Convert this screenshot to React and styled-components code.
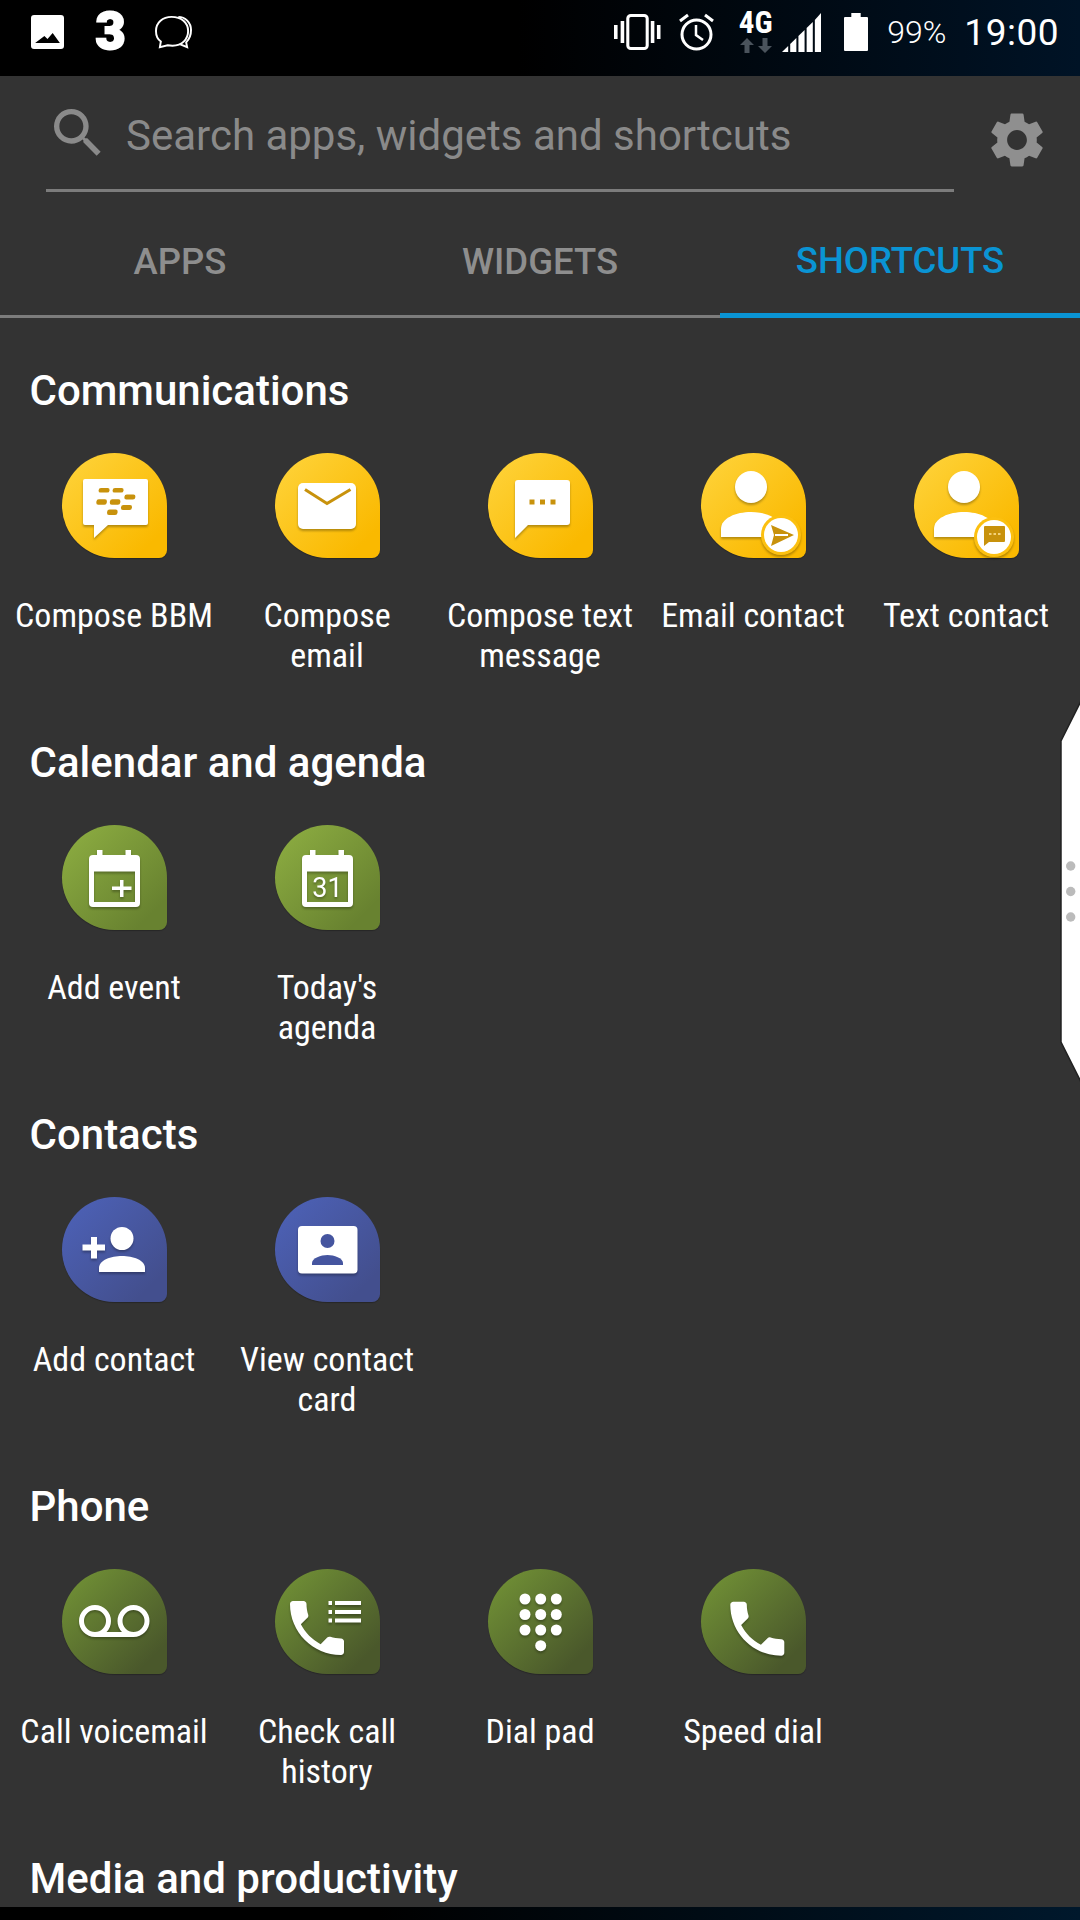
import React from 'react'
import styled, { createGlobalStyle } from 'styled-components'
import { MdSearch, MdSettings } from 'react-icons/md'

const PHONE = 'M6.62 10.79c1.44 2.83 3.76 5.14 6.59 6.59l2.2-2.2c.27-.27.67-.36 1.02-.24 1.12.37 2.33.57 3.57.57.55 0 1 .45 1 1V20c0 .55-.45 1-1 1-9.39 0-17-7.61-17-17 0-.55.45-1 1-1h3.5c.55 0 1 .45 1 1 0 1.25.2 2.45.57 3.57.11.35.03.74-.25 1.02l-2.2 2.2z'

const TONES = {
  yellow: { from: '#fed136', to: '#fab900', ink: '#c8920c' },
  green: { from: '#8aaa40', to: '#688230', ink: '#6f8a35' },
  blue: { from: '#4c60b4', to: '#434f8e', ink: '#45559f' },
  olive: { from: '#6f8e35', to: '#4a582b', ink: '#5c7030' },
}

const BbmGlyph = ({ ink }) => (
  <>
    <path d="M23 26h61a2 2 0 0 1 2 2v42a2 2 0 0 1-2 2H46L32 85V72h-9a2 2 0 0 1-2-2V28a2 2 0 0 1 2-2z" fill="#fff" />
    <g fill={ink} transform="skewX(-6) translate(5 0)">
      <rect x="35.5" y="35" width="11" height="4.6" rx="2.2" />
      <rect x="49.5" y="35" width="11" height="4.6" rx="2.2" />
      <rect x="62" y="41.5" width="11" height="5" rx="2.2" />
      <rect x="34.5" y="46.3" width="10.5" height="5.4" rx="2.2" />
      <rect x="48" y="46.3" width="10.5" height="5.4" rx="2.2" />
      <rect x="59.7" y="52" width="11" height="5" rx="2.2" />
      <rect x="46.3" y="56.5" width="10.5" height="5.4" rx="2.2" />
    </g>
  </>
)

const MailGlyph = ({ ink }) => (
  <>
    <rect x="23" y="30" width="58" height="46" rx="5" fill="#fff" />
    <path d="M30 36.500l22 14 23.500-14" fill="none" stroke={ink} strokeWidth="3" />
  </>
)

const TextGlyph = ({ ink }) => (
  <>
    <path d="M30 27h49a3 3 0 0 1 3 3v39a3 3 0 0 1-3 3H40L27 85V30a3 3 0 0 1 3-3z" fill="#fff" />
    <g fill={ink}>
      <rect x="41.500" y="46.500" width="5" height="5" />
      <rect x="52" y="46.500" width="5" height="5" />
      <rect x="62.500" y="46.500" width="5" height="5" />
    </g>
  </>
)

const PersonBase = () => (
  <>
    <circle cx="50" cy="34" r="16" fill="#fff" />
    <path d="M20 84V76c0-11 15-17 30-17s30 6 30 17v8z" fill="#fff" />
  </>
)

const EmailContactGlyph = ({ ink }) => (
  <>
    <PersonBase />
    <circle cx="80" cy="82" r="20" fill="#fcc010" />
    <circle cx="80" cy="82" r="17" fill="#fff" />
    <path d="M70 72l23 10-23 11 3-11z" fill={ink} />
    <path d="M74 82h13" stroke="#fff" strokeWidth="2" />
  </>
)

const TextContactGlyph = ({ ink }) => (
  <>
    <PersonBase />
    <circle cx="80" cy="84" r="20" fill="#fcc010" />
    <circle cx="80" cy="84" r="17" fill="#fff" />
    <path d="M71 73h19a1 1 0 0 1 1 1v14a1 1 0 0 1-1 1H75l-5 4V74a1 1 0 0 1 1-1z" fill={ink} />
    <g fill="#f3d27a">
      <rect x="75" y="80" width="2.500" height="2" />
      <rect x="79.500" y="80" width="2.500" height="2" />
      <rect x="84" y="80" width="2.500" height="2" />
    </g>
  </>
)

const CalendarBase = ({ x = 27 }) => (
  <path
    fillRule="evenodd"
    fill="#fff"
    d={`M${x + 8} 25h5.500v5h23v-5h5.500v5h5a4 4 0 0 1 4 4v44a4 4 0 0 1-4 4h-43a4 4 0 0 1-4-4v-44a4 4 0 0 1 4-4h4zM${x + 5} 46.500v30.500h41v-30.500z`}
  />
)

const AddEventGlyph = () => (
  <>
    <CalendarBase />
    <path d="M58 55h3.500v6.500h8v3.500h-8v7h-3.500v-7h-8v-3.500h8z" fill="#fff" />
  </>
)

const AgendaGlyph = () => (
  <>
    <CalendarBase />
    <GlyphText x="52.500" y="72" fontSize="27">31</GlyphText>
  </>
)

const AddContactGlyph = () => (
  <>
    <path d="M29 40h6v7.500h8v6h-8v8h-6v-8h-8.500v-6h8.500z" fill="#fff" />
    <circle cx="60" cy="41.500" r="11.500" fill="#fff" />
    <path d="M37 75v-4c0-8 12-12 23-12s23 4 23 12v4z" fill="#fff" />
  </>
)

const ContactCardGlyph = ({ ink }) => (
  <>
    <rect x="23" y="29" width="59.500" height="47.500" rx="4" fill="#fff" />
    <circle cx="52.500" cy="44" r="7" fill={ink} />
    <path d="M37 68v-2c0-5 9-8 15.500-8s15.500 3 15.500 8v2z" fill={ink} />
  </>
)

const VoicemailGlyph = () => (
  <g fill="none" stroke="#fff" strokeWidth="5">
    <circle cx="33" cy="52" r="13.500" />
    <circle cx="71.500" cy="52" r="13.500" />
    <path d="M33 65.500h38.500" />
  </g>
)

const HistoryGlyph = () => (
  <>
    <path d={PHONE} transform="translate(6 23) scale(3)" fill="#fff" />
    <g fill="#fff">
      <rect x="53.500" y="32" width="3.500" height="4" />
      <rect x="53.500" y="41" width="3.500" height="4" />
      <rect x="53.500" y="49.500" width="3.500" height="4" />
      <rect x="60" y="32" width="26" height="4" />
      <rect x="60" y="41" width="26" height="4" />
      <rect x="60" y="49.500" width="26" height="4" />
    </g>
  </>
)

const DialGlyph = () => (
  <g fill="#fff">
    {[30, 45.5, 61].flatMap((cy) =>
      [37, 52.700, 68.300].map((cx) => <circle key={`${cx}-${cy}`} cx={cx} cy={cy} r="5.500" />)
    )}
    <circle cx="52.700" cy="76.700" r="5.500" />
  </g>
)

const SpeedGlyph = () => <path d={PHONE} transform="translate(20.300 23.700) scale(3)" fill="#fff" />

const SECTIONS = [
  {
    title: 'Communications',
    tone: 'yellow',
    items: [
      { label: 'Compose BBM', Glyph: BbmGlyph },
      { label: 'Compose email', Glyph: MailGlyph },
      { label: 'Compose text message', Glyph: TextGlyph },
      { label: 'Email contact', Glyph: EmailContactGlyph },
      { label: 'Text contact', Glyph: TextContactGlyph },
    ],
  },
  {
    title: 'Calendar and agenda',
    tone: 'green',
    items: [
      { label: 'Add event', Glyph: AddEventGlyph },
      { label: "Today's agenda", Glyph: AgendaGlyph },
    ],
  },
  {
    title: 'Contacts',
    tone: 'blue',
    items: [
      { label: 'Add contact', Glyph: AddContactGlyph },
      { label: 'View contact card', Glyph: ContactCardGlyph },
    ],
  },
  {
    title: 'Phone',
    tone: 'olive',
    items: [
      { label: 'Call voicemail', Glyph: VoicemailGlyph },
      { label: 'Check call history', Glyph: HistoryGlyph },
      { label: 'Dial pad', Glyph: DialGlyph },
      { label: 'Speed dial', Glyph: SpeedGlyph },
    ],
  },
  { title: 'Media and productivity', tone: 'olive', items: [] },
]

const TABS = ['APPS', 'WIDGETS', 'SHORTCUTS']

const Shortcut = ({ label, tone, Glyph }) => (
  <Cell>
    <Bubble $tone={tone}>
      <GlyphArt viewBox="0 0 105 105">
        <Glyph ink={TONES[tone].ink} />
      </GlyphArt>
    </Bubble>
    <Label>{label}</Label>
  </Cell>
)

const App = () => (
  <Screen>
    <GlobalStyle />
    <StatusBar>
      <StatusIcon $w={33} $h={34} $ml={31} viewBox="0 0 32 34" preserveAspectRatio="none">
        <path fillRule="evenodd" fill="#fff" d="M3 0h26a3 3 0 0 1 3 3v28a3 3 0 0 1-3 3H3a3 3 0 0 1-3-3V3a3 3 0 0 1 3-3zM4 28h24l-7-10-5 6-3-3z" />
      </StatusIcon>
      <CarrierLogo>3</CarrierLogo>
      <StatusIcon $w={37} $h={34} $ml={29} viewBox="0 0 38 36" preserveAspectRatio="none">
        <g fill="none" stroke="#fff" strokeWidth="2">
          <path d="M24 2c7 0 13 6 13 14 0 6-2 10-5 13l1 5-7-3" />
          <path d="M17 2C8 2 1 8 1 17c0 5 2 9 5 11l-1 6 8-2c2 .4 3 .5 5 .5 10 0 16-7 16-15.500C34 8 27 2 17 2z" />
        </g>
      </StatusIcon>
      <Spacer />
      <StatusIcon $w={47} $h={36} viewBox="0 0 46 36" preserveAspectRatio="none">
        <g fill="#fff">
          <rect x="0" y="11" width="3.500" height="14" />
          <rect x="42" y="11" width="3.500" height="14" />
          <rect x="6.500" y="7" width="3.500" height="22" />
          <rect x="36" y="7" width="3.500" height="22" />
        </g>
        <rect x="13.500" y="1.500" width="19" height="33" rx="3" fill="none" stroke="#fff" strokeWidth="3" />
      </StatusIcon>
      <StatusIcon $w={35} $h={38} $ml={18} viewBox="0 0 35 38">
        <g fill="none" stroke="#fff" strokeWidth="3">
          <circle cx="17.500" cy="21.500" r="14.500" />
          <path d="M17 12v10l7 5" strokeWidth="2.500" />
          <path d="M1 8l8-6M34 8l-8-6" />
        </g>
      </StatusIcon>
      <NetworkBadge>
        <NetworkText>4G</NetworkText>
        <svg width="32" height="15" viewBox="0 0 32 15">
          <path d="M7 0l7 7H9.500v8h-5V7H0zM25 15l7-7h-4.500V0h-5v8H18z" fill="#4a535c" />
        </svg>
      </NetworkBadge>
      <StatusIcon $w={39} $h={39} $ml={10} viewBox="0 0 38 39" preserveAspectRatio="none">
        <g fill="#fff">
          <path d="M0 39l6-6v6z" />
          <path d="M8 31l6-6v14H8z" />
          <path d="M16 23l6-6v22h-6z" />
          <path d="M24 15l6-6v30h-6z" />
          <path d="M32 7l6-7v39h-6z" />
        </g>
      </StatusIcon>
      <StatusIcon $w={24} $h={38} $ml={23} viewBox="0 0 23 38" preserveAspectRatio="none">
        <path d="M1 4h6V0h9v4h6a1 1 0 0 1 1 1v32a1 1 0 0 1-1 1H1a1 1 0 0 1-1-1V5a1 1 0 0 1 1-1z" fill="#fff" />
      </StatusIcon>
      <Percent>99%</Percent>
      <Clock>19:00</Clock>
    </StatusBar>

    <Panel>
      <SearchRow>
        <SearchBox>
          <SearchGlyph />
          <SearchHint>Search apps, widgets and shortcuts</SearchHint>
        </SearchBox>
        <GearSlot>
          <MdSettings size={66} color="#8f8f8f" />
        </GearSlot>
      </SearchRow>

      <TabRow>
        {TABS.map((tab) => (
          <Tab key={tab} $active={tab === 'SHORTCUTS'}>{tab}</Tab>
        ))}
      </TabRow>

      <Sections>
        {SECTIONS.map((section) => (
          <Section key={section.title}>
            <Heading>{section.title}</Heading>
            {section.items.length > 0 && (
              <ShortcutGrid>
                {section.items.map((item) => (
                  <Shortcut key={item.label} tone={section.tone} {...item} />
                ))}
              </ShortcutGrid>
            )}
          </Section>
        ))}
      </Sections>

      <EdgeHandle width="21" height="384" viewBox="0 -2 21 384">
        <path d="M23 -4L2 38v301l21 42z" fill="#fff" stroke="#222" strokeWidth="1.500" />
        <circle cx="11.700" cy="163" r="4.700" fill="#bbb" />
        <circle cx="11.700" cy="188.500" r="4.700" fill="#bbb" />
        <circle cx="11.700" cy="214" r="4.700" fill="#bbb" />
      </EdgeHandle>
    </Panel>

    <NavEdge />
  </Screen>
)

export default App

// COMPONENTS

const GlobalStyle = createGlobalStyle`
  html, body {
    margin: 0;
    padding: 0;
    background: #333;
  }
  * {
    box-sizing: border-box;
  }
`

const Screen = styled.div`
  width: 1080px;
  height: 1920px;
  display: flex;
  flex-direction: column;
  overflow: hidden;
  font-family: Roboto, "Liberation Sans", sans-serif;
`

const StatusBar = styled.div`
  height: 76px;
  flex: none;
  display: flex;
  align-items: center;
  padding: 0 21px 12px 0;
  background: linear-gradient(90deg, #000 0%, #000 48%, #001326 100%);
  color: #fff;
`

const StatusIcon = styled.svg`
  flex: none;
  width: ${(p) => p.$w}px;
  height: ${(p) => p.$h}px;
  margin-left: ${(p) => p.$ml || 0}px;
`

const CarrierLogo = styled.span`
  margin-left: 31px;
  width: 31px;
  font-size: 52px;
  line-height: 52px;
  font-weight: 900;
  text-align: center;
  -webkit-text-stroke: 2px #fff;
`

const Spacer = styled.div`
  flex: 1;
`

const NetworkBadge = styled.div`
  margin-left: 25px;
  width: 33px;
  display: flex;
  flex-direction: column;
  align-items: center;
  gap: 4px;
`

const NetworkText = styled.span`
  font-size: 31px;
  line-height: 23px;
  font-weight: 700;
  font-stretch: condensed;
`

const Percent = styled.span`
  margin-left: 19px;
  font-size: 32px;
  font-weight: 300;
`

const Clock = styled.span`
  margin-left: 18px;
  font-size: 37px;
  letter-spacing: .5px;
`

const Panel = styled.div`
  position: relative;
  flex: 1;
  min-height: 0;
  display: flex;
  flex-direction: column;
  background: #333;
`

const SearchRow = styled.div`
  height: 116px;
  flex: none;
  display: flex;
  padding-left: 46px;
`

const SearchBox = styled.div`
  width: 908px;
  display: flex;
  align-items: center;
  gap: 16px;
  border-bottom: 3px solid #7c7c7c;
`

const SearchGlyph = styled(MdSearch)`
  width: 64px;
  height: 64px;
  color: #8a8a8a;
`

const SearchHint = styled.span`
  padding-top: 5px;
  font-size: 42px;
  color: #8a8a8a;
  white-space: nowrap;
`

const GearSlot = styled.div`
  flex: 1;
  display: flex;
  align-items: center;
  justify-content: center;
  padding-top: 12px;
`

const TabRow = styled.div`
  height: 126px;
  flex: none;
  display: grid;
  grid-template-columns: repeat(3, 1fr);
`

const Tab = styled.div`
  display: flex;
  align-items: center;
  justify-content: center;
  padding-top: 16px;
  font-size: 36.500px;
  font-weight: 500;
  color: ${(p) => (p.$active ? '#0a94d4' : '#8e8e8e')};
  border-bottom: ${(p) => (p.$active ? '5px solid #0a94d4' : '3px solid #7c7c7c')};
`

const Sections = styled.div`
  flex: 1;
  min-height: 0;
  overflow: hidden;
  padding: 48px 7.500px 0;
`

const Section = styled.section`
  margin-bottom: 62px;
`

const Heading = styled.h2`
  margin: 0 0 39px 22px;
  font-size: 42px;
  line-height: 50px;
  font-weight: 500;
  color: #fff;
  height: 48px;
`

const ShortcutGrid = styled.div`
  display: grid;
  grid-template-columns: repeat(5, 213px);
`

const Cell = styled.div`
  height: 223px;
  display: flex;
  flex-direction: column;
  align-items: center;
  gap: 37px;
`

const Bubble = styled.div`
  width: 105px;
  height: 105px;
  flex: none;
  border-radius: 50% 50% 8px 50%;
  background: linear-gradient(135deg, ${(p) => TONES[p.$tone].from} 10%, ${(p) => TONES[p.$tone].to} 85%);
  box-shadow: 0 1px 1px rgba(0, 0, 0, .25);
`

const GlyphArt = styled.svg`
  display: block;
  width: 105px;
  height: 105px;
  overflow: visible;
  filter: drop-shadow(0 2px 1px rgba(0, 0, 0, .28));
`

const GlyphText = styled.text`
  font-family: Roboto, sans-serif;
  fill: #fff;
  text-anchor: middle;
`

const Label = styled.div`
  width: 200px;
  font-size: 34px;
  line-height: 40px;
  font-stretch: condensed;
  text-align: center;
  color: #fff;
`

const EdgeHandle = styled.svg`
  position: absolute;
  right: 0;
  top: 625px;
`

const NavEdge = styled.div`
  height: 13px;
  flex: none;
  background: linear-gradient(90deg, #000 0%, #000 35%, #00182c 100%);
`
